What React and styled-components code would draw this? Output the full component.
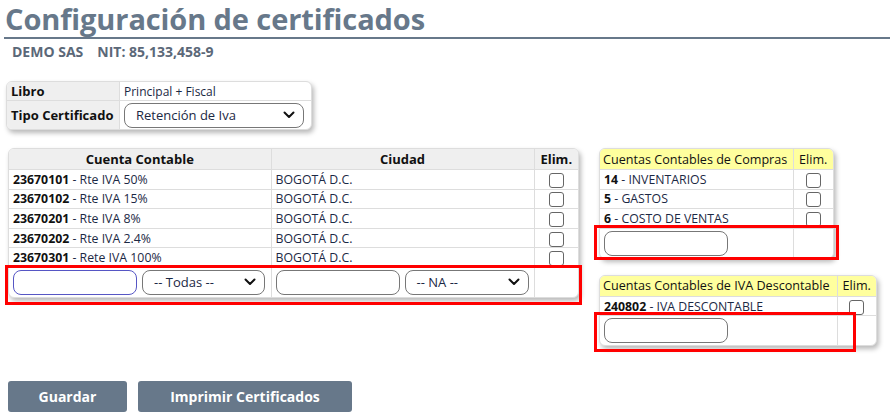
import React from "react";
import styled, { createGlobalStyle } from "styled-components";

const GlobalStyle = createGlobalStyle`
  body {
    margin: 0;
    background: #fff;
    font-family: "Open Sans", "Noto Sans", sans-serif;
    color: #1b2844;
  }
`;

const Page = styled.div`
  position: relative;
  width: 890px;
  height: 417px;
  overflow: hidden;
`;

const Title = styled.h1`
  margin: 0 0 0 4px;
  padding: 0 0 0 1px;
  font-size: 29px;
  line-height: 37px;
  font-weight: 700;
  color: #67788a;
  border-bottom: 2px solid #67788a;
  letter-spacing: -0.1px;
`;

const Company = styled.div`
  display: flex;
  gap: 14px;
  padding: 3px 0 0 12px;
  font-size: 14px;
  font-weight: 700;
  color: #5b6878;
`;

const Card = styled.div`
  border-radius: 6px;
  box-shadow: 2px 3px 5px rgba(0, 0, 0, 0.28);
  border: 1px solid #ddd;
  overflow: hidden;
  background: #fff;
  width: ${(p) => p.$w}px;
`;

const Table = styled.table`
  border-collapse: collapse;
  width: 100%;
  font-size: 12.3px;
  table-layout: fixed;
`;

const Th = styled.th`
  background: ${(p) => (p.$yellow ? "#ffff9e" : "#efefef")};
  font-size: ${(p) => (p.$yellow ? 12.6 : 13)}px;
  font-weight: ${(p) => (p.$yellow ? 400 : 700)};
  color: #111;
  height: 20px;
  padding: 0 ${(p) => (p.$yellow ? 3 : 4)}px;
  text-align: center;
  white-space: nowrap;
  border-left: 1px solid #ddd;
  border-bottom: 1px solid #ddd;
  &:first-child {
    border-left: none;
    text-align: ${(p) => (p.$left ? "left" : "center")};
  }
`;

const Td = styled.td`
  height: 18.6px;
  padding: 0 4px;
  white-space: nowrap;
  border-left: 1px solid #ddd;
  border-top: 1px solid #ddd;
  text-align: ${(p) => (p.$center ? "center" : "left")};
  vertical-align: middle;
  &:first-child {
    border-left: none;
  }
`;

const InputTd = styled(Td)`
  height: 29px;
  padding: 0 4px;
`;

const Pair = styled.div`
  display: flex;
  gap: 5px;
`;

const Code = styled.b`
  color: #111;
`;

const LabelTd = styled.td`
  background: #efefef;
  font-weight: 700;
  font-size: 13px;
  color: #111;
  padding: 0 4px;
  width: 104px;
  height: ${(p) => p.$h}px;
  border-right: 1px solid #ddd;
  border-top: ${(p) => (p.$first ? "none" : "1px solid #ddd")};
`;

const ValueTd = styled.td`
  padding: 0 4px;
  font-size: 12px;
  border-top: ${(p) => (p.$first ? "none" : "1px solid #ddd")};
`;

const Input = styled.input`
  box-sizing: border-box;
  width: ${(p) => p.$w || 124}px;
  height: 25px;
  border: 1px solid ${(p) => (p.$focus ? "#5656c4" : "#777")};
  border-radius: 8px;
  background: #fff;
  display: block;
`;

const SelectBox = styled.div`
  box-sizing: border-box;
  width: ${(p) => p.$w || 124}px;
  height: 25px;
  border: 1px solid #777;
  border-radius: 8px;
  display: flex;
  align-items: center;
  justify-content: space-between;
  padding: 0 8px 0 11px;
  font-size: 13px;
  color: #1b2844;
`;

const Check = styled.span`
  display: inline-block;
  box-sizing: border-box;
  width: 15px;
  height: 15px;
  border: 1px solid #666;
  border-radius: 3px;
  vertical-align: middle;
`;

const TopBlock = styled.div`
  padding: 20px 0 0 6px;
`;

const Main = styled.div`
  display: flex;
  align-items: flex-start;
  padding: 18px 0 0 8px;
  gap: 20px;
`;

const Side = styled.div`
  display: flex;
  flex-direction: column;
  gap: 16px;
`;

const Buttons = styled.div`
  display: flex;
  gap: 11px;
  padding: 0 0 0 8px;
  position: absolute;
  top: 381px;
  left: 0;
`;

const Button = styled.button`
  height: 31px;
  width: ${(p) => p.$w}px;
  padding: 0;
  border: none;
  border-radius: 3px;
  background: #67788a;
  color: #fff;
  font-family: "Open Sans", "Noto Sans", sans-serif;
  font-weight: 700;
  font-size: 14px;
`;

const Highlight = styled.div`
  position: absolute;
  left: ${(p) => p.$x}px;
  top: ${(p) => p.$y}px;
  width: ${(p) => p.$w}px;
  height: ${(p) => p.$h}px;
  border: 3px solid #f00;
  box-sizing: border-box;
  pointer-events: none;
`;

const Chevron = () => (
  <svg width="12" height="8" viewBox="0 0 12 8">
    <path d="M1.5 1.5 L6 6 L10.5 1.5" fill="none" stroke="#111" strokeWidth="2" strokeLinecap="round" strokeLinejoin="round" />
  </svg>
);

const Select = ({ w, children }) => (
  <SelectBox $w={w}>
    <span>{children}</span>
    <Chevron />
  </SelectBox>
);

const cuentas = [
  ["23670101", "Rte IVA 50%"],
  ["23670102", "Rte IVA 15%"],
  ["23670201", "Rte IVA 8%"],
  ["23670202", "Rte IVA 2.4%"],
  ["23670301", "Rete IVA 100%"],
];

const compras = [
  ["14", "INVENTARIOS"],
  ["5", "GASTOS"],
  ["6", "COSTO DE VENTAS"],
];

export default function App() {
  return (
    <Page>
      <GlobalStyle />
      <Title>Configuración de certificados</Title>
      <Company>
        <span>DEMO SAS</span>
        <span>NIT: 85,133,458-9</span>
      </Company>

      <TopBlock>
        <Card $w={304}>
          <Table>
            <tbody>
              <tr>
                <LabelTd $first $h={18}>Libro</LabelTd>
                <ValueTd $first>Principal + Fiscal</ValueTd>
              </tr>
              <tr>
                <LabelTd $h={28}>Tipo Certificado</LabelTd>
                <ValueTd>
                  <Select w={180}>Retención de Iva</Select>
                </ValueTd>
              </tr>
            </tbody>
          </Table>
        </Card>
      </TopBlock>

      <Main>
        <Card $w={569}>
          <Table>
            <colgroup>
              <col style={{ width: 262 }} />
              <col style={{ width: 263 }} />
              <col />
            </colgroup>
            <thead>
              <tr>
                <Th>Cuenta Contable</Th>
                <Th>Ciudad</Th>
                <Th>Elim.</Th>
              </tr>
            </thead>
            <tbody>
              {cuentas.map(([code, name]) => (
                <tr key={code}>
                  <Td>
                    <Code>{code}</Code> - {name}
                  </Td>
                  <Td>BOGOTÁ D.C.</Td>
                  <Td $center>
                    <Check />
                  </Td>
                </tr>
              ))}
              <tr>
                <InputTd>
                  <Pair>
                    <Input $focus />
                    <Select w={123}>-- Todas --</Select>
                  </Pair>
                </InputTd>
                <InputTd>
                  <Pair>
                    <Input />
                    <Select>-- NA --</Select>
                  </Pair>
                </InputTd>
                <InputTd />
              </tr>
            </tbody>
          </Table>
        </Card>

        <Side>
          <Card $w={233}>
            <Table>
              <colgroup>
                <col style={{ width: 193 }} />
                <col />
              </colgroup>
              <thead>
                <tr>
                  <Th $yellow $left>Cuentas Contables de Compras</Th>
                  <Th $yellow>Elim.</Th>
                </tr>
              </thead>
              <tbody>
                {compras.map(([code, name]) => (
                  <tr key={code}>
                    <Td>
                      <Code>{code}</Code> - {name}
                    </Td>
                    <Td $center>
                      <Check />
                    </Td>
                  </tr>
                ))}
                <tr>
                  <InputTd>
                    <Input />
                  </InputTd>
                  <InputTd />
                </tr>
              </tbody>
            </Table>
          </Card>

          <Card $w={276}>
            <Table>
              <colgroup>
                <col style={{ width: 237 }} />
                <col />
              </colgroup>
              <thead>
                <tr>
                  <Th $yellow $left>Cuentas Contables de IVA Descontable</Th>
                  <Th $yellow>Elim.</Th>
                </tr>
              </thead>
              <tbody>
                <tr>
                  <Td>
                    <Code>240802</Code> - IVA DESCONTABLE
                  </Td>
                  <Td $center>
                    <Check />
                  </Td>
                </tr>
                <tr>
                  <InputTd>
                    <Input />
                  </InputTd>
                  <InputTd />
                </tr>
              </tbody>
            </Table>
          </Card>
        </Side>
      </Main>

      <Buttons>
        <Button $w={119}>Guardar</Button>
        <Button $w={214}>Imprimir Certificados</Button>
      </Buttons>

      <Highlight $x={5} $y={265} $w={577} $h={40} />
      <Highlight $x={594} $y={225} $w={245} $h={35} />
      <Highlight $x={594} $y={312} $w={262} $h={40} />
    </Page>
  );
}
